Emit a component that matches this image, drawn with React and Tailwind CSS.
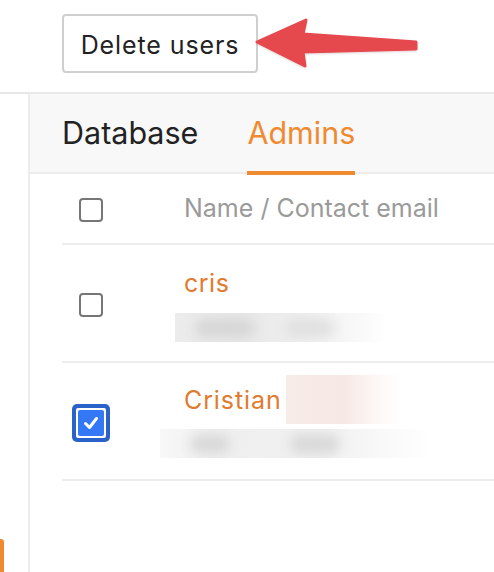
import React from "react";

function Checkbox() {
  return (
    <div className="w-[24px] h-[24px] rounded-[4px] border-2 border-[#767676] bg-white" />
  );
}

function CheckedBox() {
  return (
    <div className="w-[38px] h-[38px] rounded-[5px] bg-[#2a62c9] p-[4px]">
      <div className="w-full h-full rounded-[2px] bg-white p-[2px]">
        <div className="w-full h-full rounded-[2px] bg-[#3478f6] flex items-center justify-center">
          <svg width="18" height="18" viewBox="0 0 18 18">
            <path d="M3.5 9.5 L7.5 13.5 L14.5 4.5" fill="none" stroke="white" strokeWidth="3" strokeLinecap="round" strokeLinejoin="round" />
          </svg>
        </div>
      </div>
    </div>
  );
}

export default function App() {
  return (
    <div className="relative w-[494px] h-[572px] overflow-hidden bg-white font-['Inter',sans-serif]">
      {/* top bar */}
      <div className="h-[94px] border-b-2 border-[#e8e8e8] pl-[62px] pt-[14px]">
        <button className="w-[196px] h-[59px] pt-[4px] rounded-[4px] border-2 border-[#cfcfcf] bg-white text-[25px] text-[#222] tracking-[0.9px]">
          Delete users
        </button>
      </div>

      {/* arrow annotation overlay */}
      <svg className="absolute left-0 top-0" width="494" height="100" viewBox="0 0 494 100">
        <defs>
          <filter id="sh" x="-10%" y="-20%" width="120%" height="140%">
            <feDropShadow dx="0" dy="1" stdDeviation="1" floodColor="#000" floodOpacity="0.15" />
          </filter>
        </defs>
        <path
          d="M257 42 L306 20 L303 34 L416 42 L416 49 L303 52 L305 66 Z"
          fill="#e5484d"
          stroke="#e5484d"
          strokeWidth="3"
          strokeLinejoin="round"
          filter="url(#sh)"
        />
      </svg>

      <div className="flex h-[478px]">
        <div className="w-[30px] border-r-2 border-[#ececec] flex flex-col justify-end">
          <div className="w-[4px] h-[33px] rounded-tr-[3px] bg-[#f08a30]" />
        </div>
        <div className="flex-1 flex flex-col">
          <div className="h-[80px] bg-[#f8f8f8] border-b-2 border-[#ececec] flex items-center pl-[32px] gap-[49px]">
            <div className="text-[30.5px] text-[#222]">Database</div>
            <div className="relative h-full flex items-center text-[30.5px] text-[#f08a30]">
              Admins
              <div className="absolute left-0 right-0 bottom-[-3px] h-[4px] bg-[#f08a30]" />
            </div>
          </div>
          <div className="pl-[32px] flex flex-col">
            <div className="h-[71px] border-b-2 border-[#ececec] flex items-center">
              <div className="w-[122px] pl-[17px] pt-[2px]"><Checkbox /></div>
              <div className="text-[25px] text-[#9a9a9a]">Name / Contact email</div>
            </div>

            <div className="h-[118px] border-b-2 border-[#ececec] flex items-start">
              <div className="w-[122px] pl-[17px] pt-[48px]"><Checkbox /></div>
              <div className="flex flex-col pt-[23px]">
                <div className="h-[30px] leading-[30px] text-[25px] tracking-[0.5px] text-[#e07b30]">cris</div>
                <div className="relative mt-[15px] ml-[-9px] w-[212px] h-[29px] overflow-hidden bg-[linear-gradient(90deg,#ececec,#e8e8e8_30%,#efefef_60%,#fafafa_90%,#fff)]">
                  <div className="absolute left-[20px] top-[6px] w-[60px] h-[18px] rounded-full bg-[#d6d6d6] blur-[6px]" />
                  <div className="absolute left-[110px] top-[6px] w-[50px] h-[18px] rounded-full bg-[#e0e0e0] blur-[6px]" />
                </div>
              </div>
            </div>

            <div className="h-[118px] border-b-2 border-[#ececec] flex items-start">
              <div className="w-[122px] pl-[10px] pt-[41px]"><CheckedBox /></div>
              <div className="flex flex-col pt-[12px]">
                <div className="flex items-center h-[49px] gap-[4px]">
                  <div className="text-[25px] leading-[30px] tracking-[0.9px] text-[#e07b30]">Cristian</div>
                  <div className="w-[115px] h-[49px] bg-[linear-gradient(90deg,#f8ece8,#f6e8e4_50%,#fdf8f6_80%,#fff)]" />
                </div>
                <div className="relative mt-[5px] ml-[-24px] w-[272px] h-[29px] overflow-hidden bg-[linear-gradient(90deg,#f8f8f8,#efefef_20%,#f0f0f0_60%,#fafafa_85%,#fff)]">
                  <div className="absolute left-[30px] top-[6px] w-[40px] h-[18px] rounded-full bg-[#d8d8d8] blur-[6px]" />
                  <div className="absolute left-[130px] top-[6px] w-[50px] h-[18px] rounded-full bg-[#d8d8d8] blur-[6px]" />
                </div>
              </div>
            </div>
          </div>
        </div>
      </div>
    </div>
  );
}
